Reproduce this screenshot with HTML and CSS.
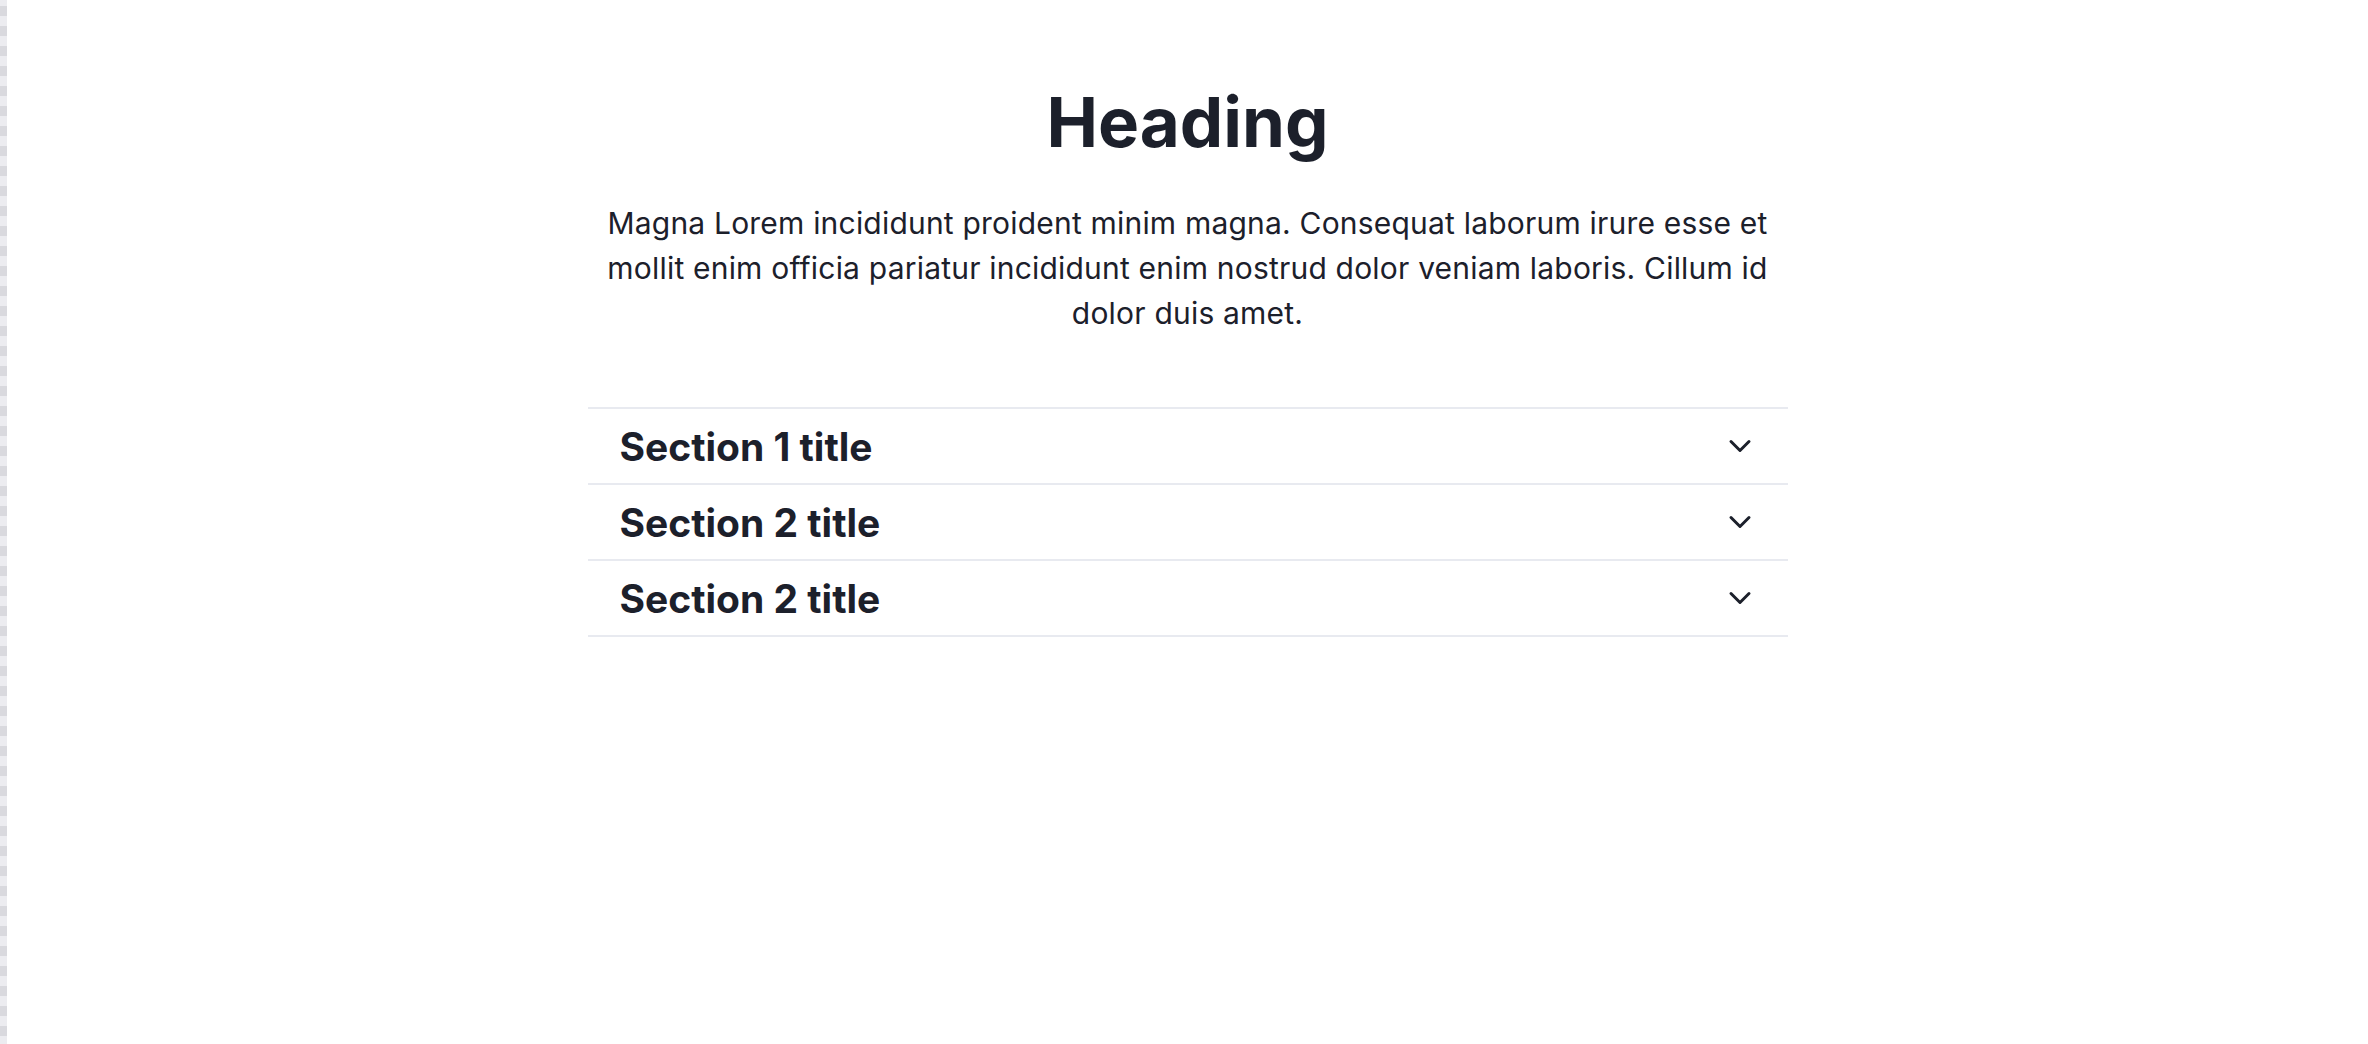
FILE: index.html
```html
<!DOCTYPE html>
<html lang="en">
<head>
<meta charset="utf-8">
<title>Heading</title>
<link rel="stylesheet" href="styles.css">
</head>
<body>
<div class="page">
  <div class="stripe"></div>
  <main class="main">
    <div class="content">
      <h1 class="title">Heading</h1>
      <p class="lead">Magna Lorem incididunt proident minim magna. Consequat laborum irure esse et mollit enim officia pariatur incididunt enim nostrud dolor veniam laboris. Cillum id dolor duis amet.</p>
      <div class="accordion">
        <div class="acc-item">
          <span class="acc-title">Section 1 title</span>
          <svg class="chev" viewBox="0 0 24 24" fill="none" stroke="currentColor" stroke-width="2" stroke-linecap="round" stroke-linejoin="round"><path d="M6 9l6 6 6-6"/></svg>
        </div>
        <div class="acc-item">
          <span class="acc-title">Section 2 title</span>
          <svg class="chev" viewBox="0 0 24 24" fill="none" stroke="currentColor" stroke-width="2" stroke-linecap="round" stroke-linejoin="round"><path d="M6 9l6 6 6-6"/></svg>
        </div>
        <div class="acc-item">
          <span class="acc-title">Section 2 title</span>
          <svg class="chev" viewBox="0 0 24 24" fill="none" stroke="currentColor" stroke-width="2" stroke-linecap="round" stroke-linejoin="round"><path d="M6 9l6 6 6-6"/></svg>
        </div>
      </div>
    </div>
  </main>
</div>
</body>
</html>
```
FILE: styles.css
```css
html, body {
  margin: 0;
  padding: 0;
  background: #ffffff;
}
body {
  font-family: Inter, "Noto Sans", sans-serif;
  color: #1c202b;
}
.page {
  display: flex;
  min-height: 1044px;
}
.stripe {
  width: 7px;
  flex: 0 0 7px;
  background: repeating-linear-gradient(to bottom, #ececf0 0, #ececf0 6px, #d9d9de 6px, #d9d9de 16px, #ececf0 16px, #ececf0 20px);
}
.main {
  flex: 1;
  display: flex;
  justify-content: center;
  padding-top: 79px;
}
.content {
  width: 1200px;
  display: flex;
  flex-direction: column;
  align-items: stretch;
}
.title {
  margin: 0;
  font-size: 69px;
  line-height: 86px;
  font-weight: 700;
  text-align: center;
  letter-spacing: 0;
}
.lead {
  margin: 36px 0 0;
  font-size: 30px;
  line-height: 45px;
  text-align: center;
  letter-spacing: 0.2px;
  padding: 0 8px;
}
.accordion {
  margin-top: 71px;
  border-bottom: 2px solid #e8eaf0;
}
.acc-item {
  display: flex;
  align-items: center;
  justify-content: space-between;
  height: 74px;
  border-top: 2px solid #e8eaf0;
  padding: 0 30px 0 32px;
}
.acc-title {
  font-size: 39px;
  font-weight: 700;
}
.chev {
  width: 36px;
  height: 36px;
  color: #1c202b;
}
```
